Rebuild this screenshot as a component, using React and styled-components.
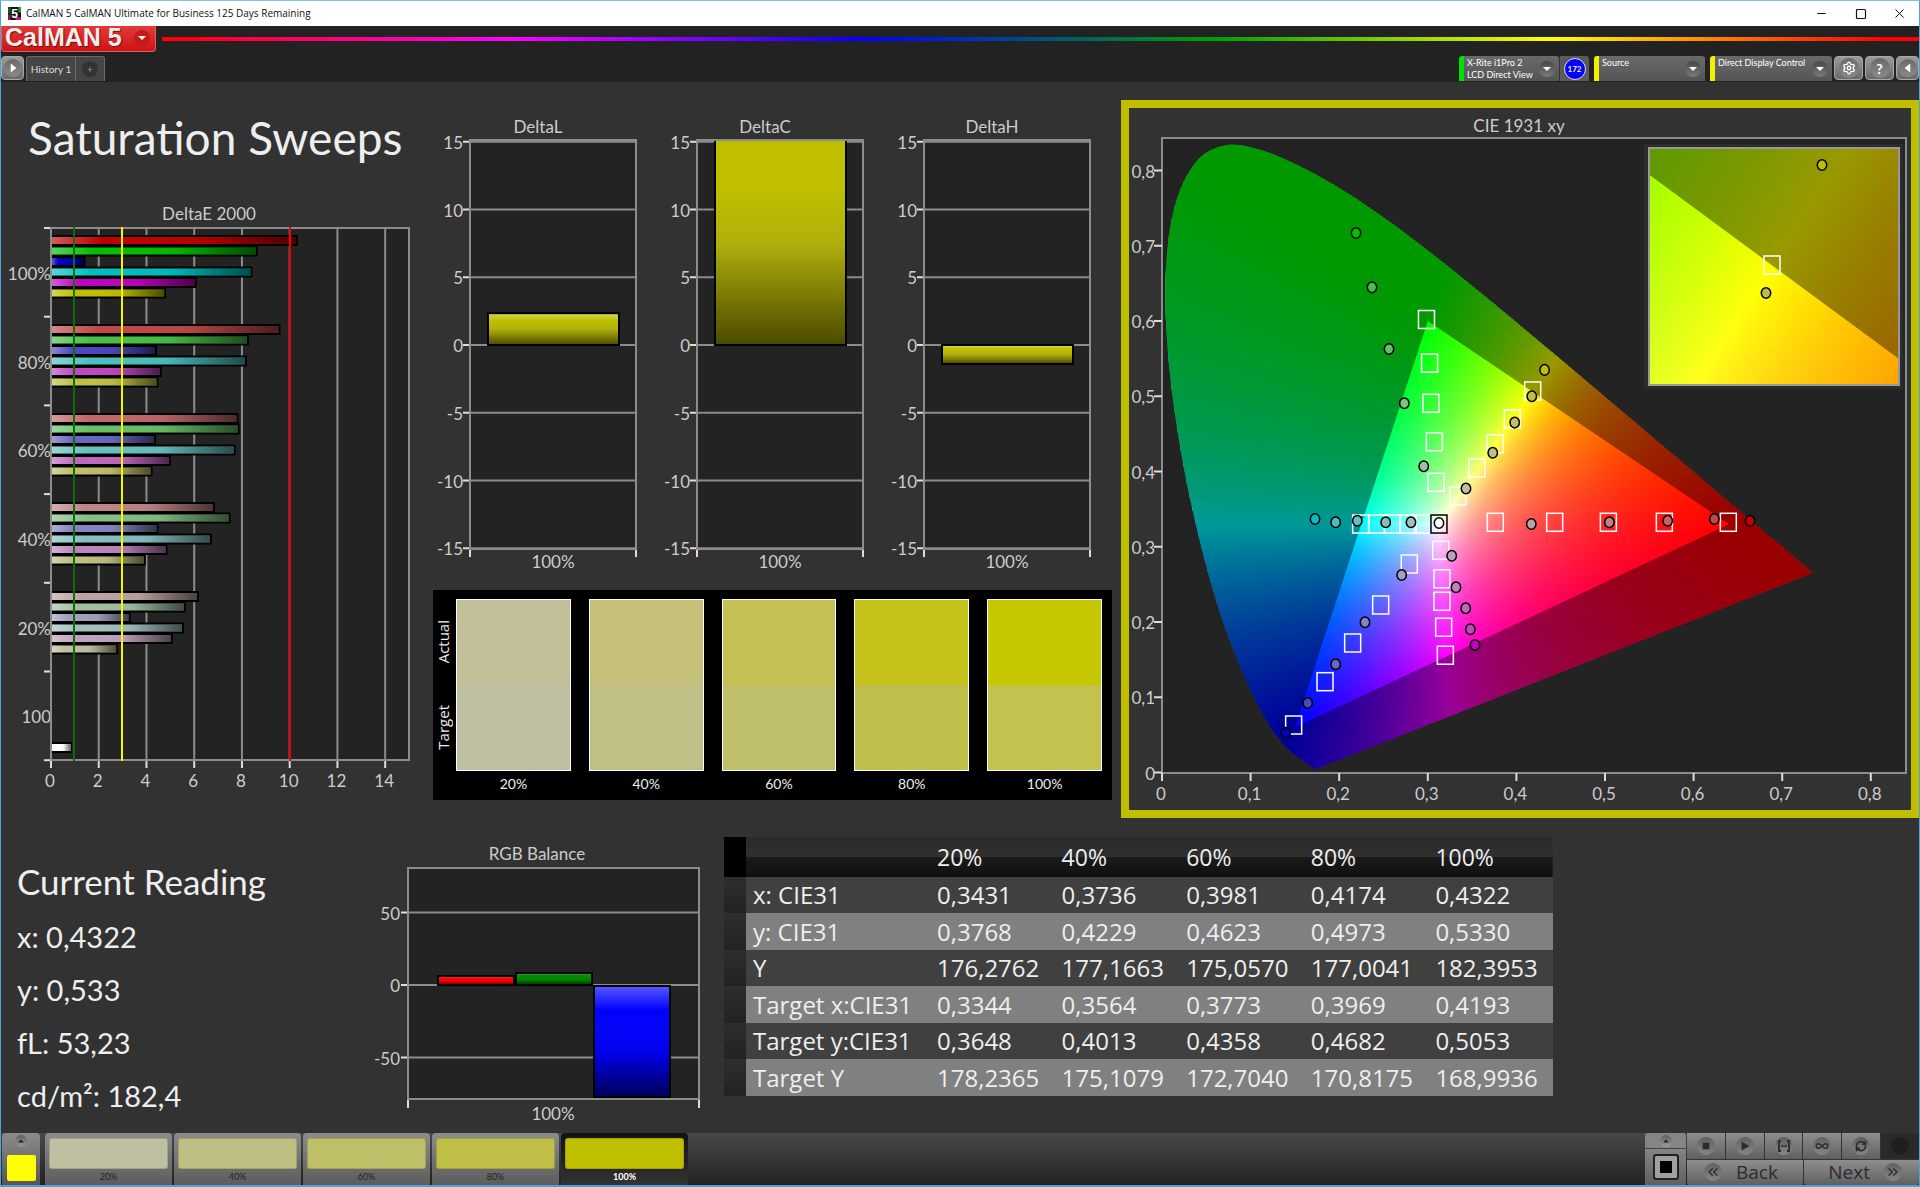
import React from 'react'
import styled, { createGlobalStyle, css } from 'styled-components';
import { Settings, RefreshCw, Infinity as Loop, ChevronsLeft, ChevronsRight, Minus, Square, X } from 'lucide-react';

const levels = ["20%", "40%", "60%", "80%", "100%"];
const lowChannel = { "20%": 161, "40%": 131, "60%": 103, "80%": 72, "100%": 0 };
const hueMask = {
  red: [1, 0, 0],
  green: [0, 1, 0],
  blue: [0, 0, 1],
  cyan: [0, 1, 1],
  magenta: [1, 0, 1],
  yellow: [1, 1, 0],
};
const hues = Object.keys(hueMask);

function shade(hue, level) {
  const low = lowChannel[level];
  return `rgb(${hueMask[hue].map((on) => (on ? 191 : low)).join(",")})`;
}

const deltaE = [
  { label: "100%", values: [10.3, 8.62, 1.4, 8.4, 6.06, 4.78] },
  { label: "80%", values: [9.57, 8.25, 4.4, 8.17, 4.6, 4.46] },
  { label: "60%", values: [7.81, 7.86, 4.36, 7.69, 4.98, 4.21] },
  { label: "40%", values: [6.83, 7.48, 4.46, 6.7, 4.84, 3.93] },
  { label: "20%", values: [6.16, 5.6, 3.29, 5.53, 5.07, 2.77] },
];

const swatches = [
  { label: "20%", actual: "#c2be98", target: "#bfbfa4" },
  { label: "40%", actual: "#c5c077", target: "#bfbf86" },
  { label: "60%", actual: "#c4c051", target: "#bfbf6a" },
  { label: "80%", actual: "#c5c21c", target: "#bfbf4b" },
  { label: "100%", actual: "#c5c800", target: "#c2c24e" },
];

const readings = ["x: 0,4322", "y: 0,533", "fL: 53,23", "cd/m²: 182,4"];

const tableRows = [
  ["x: CIE31", "0,3431", "0,3736", "0,3981", "0,4174", "0,4322"],
  ["y: CIE31", "0,3768", "0,4229", "0,4623", "0,4973", "0,5330"],
  ["Y", "176,2762", "177,1663", "175,0570", "177,0041", "182,3953"],
  ["Target x:CIE31", "0,3344", "0,3564", "0,3773", "0,3969", "0,4193"],
  ["Target y:CIE31", "0,3648", "0,4013", "0,4358", "0,4682", "0,5053"],
  ["Target Y", "178,2365", "175,1079", "172,7040", "170,8175", "168,9936"],
];

//spectral locus, 380nm - 700nm
const locus = [
  [0.1741, 0.005], [0.1714, 0.0051], [0.1689, 0.0069], [0.1644, 0.0109], [0.1566, 0.0177],
  [0.144, 0.0297], [0.1355, 0.0399], [0.1241, 0.0578], [0.1096, 0.0868], [0.0913, 0.1327],
  [0.0687, 0.2007], [0.0454, 0.295], [0.0235, 0.4127], [0.0082, 0.5384], [0.0039, 0.6548],
  [0.0139, 0.7502], [0.0389, 0.812], [0.0743, 0.8338], [0.1142, 0.8262], [0.1547, 0.8059],
  [0.1929, 0.7816], [0.2296, 0.7543], [0.2658, 0.7243], [0.3016, 0.6923], [0.3373, 0.6589],
  [0.3731, 0.6245], [0.4441, 0.5547], [0.5125, 0.4866], [0.5752, 0.4242], [0.627, 0.3725],
  [0.6658, 0.334], [0.6915, 0.3083], [0.719, 0.2809], [0.7347, 0.2653],
];
const gamut = [[0.64, 0.33], [0.3, 0.6], [0.15, 0.06]];
const white = [0.3126, 0.3302];

//20% to 100% for each hue
const targets = {
  red: [[0.3762, 0.3325], [0.4432, 0.3325], [0.5038, 0.3325], [0.567, 0.3325], [0.6392, 0.3325]],
  green: [[0.3093, 0.3856], [0.3074, 0.4396], [0.3036, 0.4906], [0.302, 0.544], [0.2985, 0.602]],
  blue: [[0.2791, 0.2771], [0.2468, 0.2226], [0.2152, 0.1721], [0.184, 0.1207], [0.1486, 0.0631]],
  cyan: [[0.2942, 0.3302], [0.2777, 0.3302], [0.26, 0.3302], [0.2423, 0.3302], [0.2242, 0.3302]],
  magenta: [[0.3146, 0.2953], [0.316, 0.2575], [0.316, 0.2275], [0.3179, 0.193], [0.3198, 0.1558]],
  yellow: [[0.3341, 0.3674], [0.3552, 0.4047], [0.3762, 0.437], [0.3954, 0.4698], [0.4184, 0.507]],
};
const measured = {
  red: [[0.4168, 0.3302], [0.5049, 0.3325], [0.5708, 0.3346], [0.6234, 0.3369], [0.6637, 0.3346]],
  green: [[0.2954, 0.4069], [0.2735, 0.4906], [0.2562, 0.5628], [0.237, 0.6447], [0.219, 0.717]],
  blue: [[0.2705, 0.2625], [0.2291, 0.1996], [0.196, 0.1438], [0.1644, 0.0924], [0.1396, 0.0529]],
  cyan: [[0.281, 0.3325], [0.2525, 0.3325], [0.2204, 0.3346], [0.196, 0.3325], [0.1727, 0.3369]],
  magenta: [[0.327, 0.2881], [0.3318, 0.2461], [0.3428, 0.2182], [0.348, 0.1903], [0.3533, 0.1694]],
  yellow: [[0.3431, 0.3775], [0.3733, 0.425], [0.3981, 0.465], [0.4174, 0.5], [0.4318, 0.535]],
};

function xyToColor(x, y) {
  const yy = Math.max(y, 0.002);
  const X = x / yy;
  const Z = (1 - x - yy) / yy;
  const rgb = [
    3.2406 * X - 1.5372 - 0.4986 * Z,
    -0.9689 * X + 1.8758 + 0.0415 * Z,
    0.0557 * X - 0.204 + 1.057 * Z,
  ].map((c) => Math.max(c, 0));
  const max = Math.max(...rgb);
  return `rgb(${rgb.map((c) => Math.round((c / max) * 255)).join(",")})`;
}

//smooth closed outline through the locus points
function locusPath(sx, sy) {
  const p = locus.map(([x, y]) => [sx(x), sy(y)]);
  let d = `M${p[0][0]} ${p[0][1]}`;
  for (let i = 0; i < p.length - 1; i++) {
    const a = p[Math.max(i - 1, 0)];
    const b = p[i];
    const c = p[i + 1];
    const e = p[Math.min(i + 2, p.length - 1)];
    d += `C${b[0] + (c[0] - a[0]) / 6} ${b[1] + (c[1] - a[1]) / 6} ${c[0] - (e[0] - b[0]) / 6} ${c[1] - (e[1] - b[1]) / 6} ${c[0]} ${c[1]}`;
  }
  return d + "Z";
}

function trianglePath(sx, sy) {
  return "M" + gamut.map(([x, y]) => `${sx(x)} ${sy(y)}`).join("L") + "Z";
}

//narrow columns, each with its own vertical gradient
function ColorField({ id, left, top, right, bottom, toX, toY }) {
  const columns = [];
  for (let px = left; px < right; px += 3) {
    const stops = [];
    for (let py = top; py <= bottom; py += 8) {
      stops.push(
        <stop key={py} offset={(py - top) / (bottom - top)} stopColor={xyToColor(toX(px + 1.5), toY(py))} />
      );
    }
    columns.push(
      <g key={px}>
        <linearGradient id={`${id}${px}`} x1="0" y1="0" x2="0" y2="1">{stops}</linearGradient>
        <rect x={px} y={top} width={Math.min(4, right - px)} height={bottom - top} fill={`url(#${id}${px})`} />
      </g>
    );
  }
  return <>{columns}</>;
}

function Target({ cx, cy, color = "#fff" }) {
  return <rect x={cx - 8} y={cy - 9} width="16" height="18" fill="none" stroke={color} strokeWidth="1.5" />;
}

function Reading({ cx, cy, fill }) {
  return <ellipse cx={cx} cy={cy} rx="4.7" ry="5.3" fill={fill} stroke="#000" strokeWidth="1.5" />;
}

function CieChart() {
  const sx = (x) => 33 + x * 886;
  const sy = (y) => 664.5 - y * 752.5;
  const ix = (x) => 643.5 + (x - 0.4193) * 3870;
  const iy = (y) => 157.5 - (y - 0.5053) * 3600;
  return (
    <Chart viewBox="0 0 782 702" role="img" aria-label="CIE 1931 xy">
      <clipPath id="locusClip"><path d={locusPath(sx, sy)} /></clipPath>
      <clipPath id="insetClip"><rect x="520" y="41" width="249" height="235" /></clipPath>
      <text x="390" y="24" textAnchor="middle">CIE 1931 xy</text>
      <rect x="33" y="30" width="744" height="635" fill="#232323" />
      <g clipPath="url(#locusClip)">
        <ColorField id="cie" left={33} top={32} right={690} bottom={664}
          toX={(px) => (px - 33) / 886} toY={(py) => (664.5 - py) / 752.5} />
      </g>
      <path d={locusPath(sx, sy) + trianglePath(sx, sy)} fill="#000" fillOpacity="0.4" fillRule="evenodd" />
      <rect x="33" y="30" width="744" height="635" fill="none" stroke="#8c8c8c" strokeWidth="2" />
      {[0, 1, 2, 3, 4, 5, 6, 7, 8].map((n) => (
        <g key={n}>
          <path d={`M${sx(n / 10)} 665v8M25 ${sy(n / 10)}h8`} stroke="#ddd" strokeWidth="2" />
          <text x={sx(n / 10) - 1} y="692" textAnchor="middle">{n ? `0,${n}` : "0"}</text>
          <text x="26" y={sy(n / 10) + 7} textAnchor="end">{n ? `0,${n}` : "0"}</text>
        </g>
      ))}
      {hues.map((hue) => targets[hue].map(([x, y], i) => (
        <Target key={hue + i} cx={sx(x)} cy={sy(y)} />
      )))}
      {hues.map((hue) => measured[hue].map(([x, y], i) => (
        <Reading key={hue + i} cx={sx(x)} cy={sy(y)} fill={shade(hue, levels[i])} />
      )))}
      <Target cx={sx(white[0])} cy={sy(white[1])} color="#000" />
      <Reading cx={sx(white[0])} cy={sy(white[1]) - 1} fill="#fff" />

      <rect x="515" y="36" width="259" height="245" fill="#2c2c2c" />
      <g clipPath="url(#insetClip)">
        <ColorField id="inset" left={519} top={40} right={770} bottom={280}
          toX={(px) => 0.4193 + (px - 643.5) / 3870} toY={(py) => 0.5053 - (py - 157.5) / 3600} />
        <path d={"M519 40H770V277H519Z" + trianglePath(ix, iy)} fill="#000" fillOpacity="0.4" fillRule="evenodd" />
      </g>
      <rect x="520" y="40" width="250" height="237" fill="none" stroke="#999" strokeWidth="2" />
      <Target cx={643} cy={157} />
      <Reading cx={693} cy={57} fill="#bfbf00" />
      <Reading cx={637} cy={185} fill={shade("yellow", "80%")} />
    </Chart>
  );
}

function DeltaEChart() {
  const unit = 23.87;
  return (
    <Chart viewBox="0 0 430 600" role="img" aria-label="DeltaE 2000">
      <linearGradient id="bar">
        <stop offset="0" stopColor="#fff" stopOpacity="0.35" />
        <stop offset="0.2" stopColor="#fff" stopOpacity="0" />
        <stop offset="0.6" stopColor="#000" stopOpacity="0.04" />
        <stop offset="1" stopColor="#000" stopOpacity="0.6" />
      </linearGradient>
      <text x="208" y="20" textAnchor="middle">DeltaE 2000</text>
      <rect x="50" y="28" width="358" height="532" fill="#232323" />
      {[0, 2, 4, 6, 8, 10, 12, 14].map((n) => (
        <g key={n}>
          <path d={`M${50 + n * unit} 28v532`} stroke="#8c8c8c" strokeWidth="2" />
          <path d={`M${50 + n * unit} 560v8`} stroke="#ddd" strokeWidth="2" />
          <text x={49 + n * unit} y="587" textAnchor="middle">{n}</text>
        </g>
      ))}
      {[0, 1, 2, 3, 4, 5, 6].map((n) => (
        <path key={n} d={`M43 ${28 + n * 88.7}h7`} stroke="#ddd" strokeWidth="2" />
      ))}
      {deltaE.map((group, g) => (
        <g key={group.label}>
          <text x="50" y={80 + g * 88.7} textAnchor="end">{group.label}</text>
          {group.values.map((value, i) => {
            const y = 36 + g * 89 + i * 10.5;
            return (
              <g key={i}>
                <rect x="51" y={y - 1} width={value * unit} height="11" fill="#000" />
                <rect x="51" y={y + 1} width={value * unit - 2} height="7" fill={shade(hues[i], group.label)} />
                <rect x="51" y={y + 1} width={value * unit - 2} height="7" fill="url(#bar)" />
              </g>
            );
          })}
        </g>
      ))}
      <text x="50" y="523" textAnchor="end">100</text>
      <rect x="51" y="542" width="20" height="11" fill="#000" />
      <rect x="51" y="544" width="19" height="7" fill="#fff" />
      <rect x="51" y="544" width="19" height="7" fill="url(#bar)" />
      <rect x="50" y="28" width="358" height="532" fill="none" stroke="#8c8c8c" strokeWidth="2" />
      <path d="M73 27v534" stroke="#0a6e0a" strokeWidth="2" />
      <path d="M121 27v534" stroke="#f5f500" strokeWidth="2" />
      <path d="M289 27v534" stroke="#f00000" strokeWidth="2" />
    </Chart>
  );
}

function DeltaChart({ title, value }) {
  const y = (v) => 233 - v * 13.55;
  const top = Math.max(y(Math.max(value, 0)), 28);
  const height = y(Math.min(value, 0)) - top;
  const id = `fill${title}`;
  return (
    <Chart viewBox="0 0 227 468" role="img" aria-label={title}>
      <linearGradient id={id} x1="0" y1="0" x2="0" y2="1">
        <stop offset="0" stopColor={value > 15 ? "#bfbf00" : "#d4d450"} />
        <stop offset="0.25" stopColor="#bfbf00" />
        <stop offset="0.5" stopColor="#b0b00c" />
        <stop offset="1" stopColor="#4a4a00" />
      </linearGradient>
      <text x="107" y="21" textAnchor="middle">{title}</text>
      <rect x="39" y="28" width="166" height="409" fill="#232323" />
      {[15, 10, 5, 0, -5, -10, -15].map((n) => (
        <g key={n}>
          <path d={`M39 ${y(n)}h166`} stroke="#8c8c8c" strokeWidth="2" />
          <path d={`M32 ${y(n)}h7`} stroke="#ddd" strokeWidth="2" />
          <text x="32" y={y(n) + 7} textAnchor="end">{n}</text>
        </g>
      ))}
      <rect x="57" y={top} width="131" height={height} fill={`url(#${id})`} stroke="#000" strokeWidth="2" />
      <rect x="39" y="28" width="166" height="409" fill="none" stroke="#8c8c8c" strokeWidth="2" />
      <path d="M39 438v7M205 438v7" stroke="#ddd" strokeWidth="2" />
      <text x="122" y="456" textAnchor="middle">100%</text>
    </Chart>
  );
}

function RgbBalance() {
  return (
    <Chart viewBox="0 0 352 300" role="img" aria-label="RGB Balance">
      <linearGradient id="rgbSheen" x1="0" y1="0" x2="0" y2="1">
        <stop offset="0" stopColor="#fff" stopOpacity="0.35" />
        <stop offset="0.22" stopColor="#fff" stopOpacity="0" />
        <stop offset="0.6" stopColor="#000" stopOpacity="0.08" />
        <stop offset="1" stopColor="#000" stopOpacity="0.65" />
      </linearGradient>
      <text x="176" y="30" textAnchor="middle">RGB Balance</text>
      <rect x="47" y="38" width="291" height="231" fill="#232323" />
      {[50, 0, -50].map((n) => (
        <g key={n}>
          <path d={`M47 ${155 - n * 1.45}h291`} stroke="#8c8c8c" strokeWidth="2" />
          <path d={`M40 ${155 - n * 1.45}h7`} stroke="#ddd" strokeWidth="2" />
          <text x="39" y={162 - n * 1.45} textAnchor="end">{n}</text>
        </g>
      ))}
      {[
        { x: 77, y: 146, h: 9, color: "#ff0000" },
        { x: 155, y: 143, h: 12, color: "#008800" },
        { x: 233, y: 156, h: 111, color: "#0000ff" },
      ].map((bar) => (
        <g key={bar.color}>
          <rect x={bar.x} y={bar.y} width="76" height={bar.h} fill={bar.color} />
          <rect x={bar.x} y={bar.y} width="76" height={bar.h} fill="url(#rgbSheen)" stroke="#000" strokeWidth="2" />
        </g>
      ))}
      <rect x="47" y="38" width="291" height="231" fill="none" stroke="#8c8c8c" strokeWidth="2" />
      <path d="M47 270v8M338 270v8" stroke="#ddd" strokeWidth="2" />
      <text x="192" y="290" textAnchor="middle">100%</text>
    </Chart>
  );
}

function Caret({ d, size = 16 }) {
  return (
    <Knob $size={size}>
      <svg width={size} height={size} viewBox="0 0 16 16"><path d={d} fill="currentColor" /></svg>
    </Knob>
  );
}
const caretDown = "M4 6h8l-4 4z";
const caretUp = "M4 10h8l-4-4z";

export default function App() {
  return (
    <Window>
      <GlobalStyle />
      <TitleBar>
        <AppIcon viewBox="0 0 14 14">
          <rect width="14" height="14" fill="#111" />
          <path d="M0 0h3v7H0z" fill="#0a5a20" />
          <path d="M11 0h3v6h-3z" fill="#1a9a30" />
          <path d="M0 8h3v6H0z" fill="#a01030" />
          <path d="M8 11h6v3H8z" fill="#c01890" />
          <text x="7" y="12" textAnchor="middle" fontSize="13" fontWeight="700" fill="#fff" fontFamily="Liberation Sans, sans-serif">5</text>
        </AppIcon>
        <TitleText>CalMAN 5 CalMAN Ultimate for Business 125 Days Remaining</TitleText>
        <WindowButton aria-label="Minimize"><Minus size={13} strokeWidth={2} /></WindowButton>
        <WindowButton aria-label="Maximize"><Square size={12} strokeWidth={2.4} /></WindowButton>
        <WindowButton aria-label="Close"><X size={15} strokeWidth={1.6} /></WindowButton>
      </TitleBar>

      <Header>
        <BrandRow>
          <Brand aria-label="CalMAN 5 menu">
            <BrandName>CalMAN 5</BrandName>
            <BrandKnob><Caret d={caretDown} /></BrandKnob>
          </Brand>
          <Rainbow />
        </BrandRow>
        <TabRow>
          <ToolButton aria-label="Run"><Caret size={18} d="M6 4v8l5-4z" /></ToolButton>
          <Tabs>
            <Tab>History 1</Tab>
            <AddTab aria-label="Add tab"><Knob $size={16} $dark>+</Knob></AddTab>
          </Tabs>
          <Device $color="#00e000" $width={100}>
            <span>X-Rite i1Pro 2<br />LCD Direct View</span>
            <Caret d={caretDown} />
          </Device>
          <MeterCell><MeterBadge>172</MeterBadge></MeterCell>
          <Device $color="#f0f000" $width={111}>
            <span>Source</span>
            <Caret d={caretDown} />
          </Device>
          <Device $color="#f0f000" $width={122}>
            <span>Direct Display Control</span>
            <Caret d={caretDown} />
          </Device>
          <ToolButton $wide aria-label="Settings"><Knob $size={20}><Settings size={14} strokeWidth={2.2} /></Knob></ToolButton>
          <ToolButton $wide aria-label="Help"><Knob $size={20}><strong>?</strong></Knob></ToolButton>
          <ToolButton aria-label="Collapse"><Caret size={18} d="M10 4v8L5 8z" /></ToolButton>
        </TabRow>
      </Header>

      <Workspace>
        <TopGrid>
          <section>
            <PageTitle>Saturation Sweeps</PageTitle>
            <DeltaEChart />
          </section>
          <Middle>
            <DeltaRow>
              <DeltaChart title="DeltaL" value={2.35} />
              <DeltaChart title="DeltaC" value={16} />
              <DeltaChart title="DeltaH" value={-1.4} />
            </DeltaRow>
            <SwatchPanel>
              <SideLabels>
                <span>Actual</span>
                <span>Target</span>
              </SideLabels>
              {swatches.map((s) => (
                <Swatch key={s.label}>
                  <SwatchBox>
                    <Fill $color={s.actual} />
                    <Fill $color={s.target} />
                  </SwatchBox>
                  <figcaption>{s.label}</figcaption>
                </Swatch>
              ))}
            </SwatchPanel>
          </Middle>
          <CiePanel><CieChart /></CiePanel>
        </TopGrid>

        <BottomGrid>
          <Current>
            <h2>Current Reading</h2>
            {readings.map((r) => <p key={r}>{r}</p>)}
          </Current>
          <RgbWrap><RgbBalance /></RgbWrap>
          <TableWrap>
            <DataTable>
              <colgroup>
                <NarrowCol />
                <NameCol />
                {levels.map((l) => <col key={l} />)}
              </colgroup>
              <thead>
                <tr>
                  <td /><td />
                  {levels.map((l) => <th key={l} scope="col">{l}</th>)}
                </tr>
              </thead>
              <tbody>
                {tableRows.map(([name, ...cells]) => (
                  <tr key={name}>
                    <td />
                    <th scope="row">{name}</th>
                    {cells.map((c, i) => <td key={i}>{c}</td>)}
                  </tr>
                ))}
              </tbody>
            </DataTable>
          </TableWrap>
        </BottomGrid>
      </Workspace>

      <BottomBar>
        <PatternButton aria-label="Pattern window">
          <Caret size={12} d={caretUp} />
          <i />
        </PatternButton>
        {levels.map((l) => (
          <LevelButton key={l} $active={l === "100%"}>
            <LevelColor $color={shade("yellow", l)} />
            {l}
          </LevelButton>
        ))}
        <Spacer />
        <StopStack>
          <UpButton aria-label="Expand"><Caret size={12} d={caretUp} /></UpButton>
          <StopButton aria-label="Stop"><i /></StopButton>
        </StopStack>
        <Controls>
          <ControlRow>
            <Control aria-label="Stop reading"><Caret size={18} d="M5 5h6v6H5z" /></Control>
            <Control aria-label="Play"><Caret size={18} d="M5 4v8l7-4z" /></Control>
            <Control aria-label="Read series">
              <Knob $size={18}>
                <svg width="14" height="14" viewBox="0 0 14 14" fill="none" stroke="currentColor" strokeWidth="1.8">
                  <path d="M4 2H2v10h2M10 2h2v10h-2M4.500 7h2M7.500 7h2" />
                </svg>
              </Knob>
            </Control>
            <Control aria-label="Read continuously"><Knob $size={18}><Loop size={14} strokeWidth={2.5} /></Knob></Control>
            <Control aria-label="Refresh"><Knob $size={18}><RefreshCw size={12} strokeWidth={3.5} /></Knob></Control>
            <Control aria-label="Idle" disabled><Knob $size={18} $dark /></Control>
          </ControlRow>
          <ControlRow>
            <NavButton><Knob $size={18}><ChevronsLeft size={16} /></Knob>Back</NavButton>
            <NavButton $end>Next<Knob $size={18}><ChevronsRight size={16} /></Knob></NavButton>
          </ControlRow>
        </Controls>
      </BottomBar>
    </Window>
  )
}


const GlobalStyle = createGlobalStyle`
  * { box-sizing: border-box; }
  body {
    margin: 0;
    background: #323232;
    font-family: Lato, "Open Sans", sans-serif;
    color: #eeeeee;
  }
  button {
    font-family: inherit;
    color: inherit;
    border: 0;
    padding: 0;
    margin: 0;
    background: none;
  }
`;

const Window = styled.div`
  min-height: 100vh;
  display: flex;
  flex-direction: column;
  border: 1px solid #4ea3d6;
  border-top-color: #7cc0ee;
  border-bottom-width: 2px;
`;

//title bar
const TitleBar = styled.div`
  height: 25px;
  flex: none;
  display: flex;
  align-items: center;
  background: #ffffff;
  color: #111111;
  padding-left: 7px;
`;
const AppIcon = styled.svg`
  width: 13px;
  height: 13px;
`;
const TitleText = styled.span`
  flex: 1;
  margin-left: 5px;
  padding-bottom: 1px;
  font: 10px/14px "Open Sans", sans-serif;
`;
const WindowButton = styled.button`
  width: 39px;
  height: 25px;
  display: flex;
  align-items: center;
  justify-content: center;
`;

//header
const Header = styled.header`
  background: #222222;
  height: 56px;
  flex: none;
`;
const BrandRow = styled.div`
  display: flex;
  height: 30px;
`;
const Brand = styled.button`
  width: 155px;
  height: 26px;
  display: flex;
  align-items: flex-start;
  background: linear-gradient(#e23a3a, #cf1414);
  border: 1px solid #e06060;
  border-top: 0;
  border-radius: 0 0 4px 4px;
`;
const BrandName = styled.span`
  flex: 1;
  text-align: left;
  padding-left: 3px;
  font: bold 25px/23px "Liberation Sans", sans-serif;
  color: #eeeeee;
  text-shadow: 1px 1px 1px #7a0c0c;
  white-space: nowrap;
`;
const BrandKnob = styled.span`
  margin: 4px 5px 0 0;
  color: #ffffff;
  > span { background: #c41a1a; }
`;
const Rainbow = styled.div`
  flex: 1;
  height: 4px;
  margin: 11px 0 0 6px;
  background: linear-gradient(90deg, #ff0000, #ff00ff 20%, #0000ff 40%, #00a000 60%, #ffff00 79%, #ff0000 98%);
`;
const TabRow = styled.div`
  display: flex;
  height: 26px;
  align-items: flex-start;
`;
const Knob = styled.span`
  width: ${(p) => p.$size}px;
  height: ${(p) => p.$size}px;
  flex: none;
  border-radius: 50%;
  display: inline-flex;
  align-items: center;
  justify-content: center;
  background: ${(p) => (p.$dark ? "rgba(0,0,0,0.25)" : "linear-gradient(rgba(0,0,0,0.3), rgba(255,255,255,0.2))")};
`;
const raised = css`
  background: linear-gradient(#9a9a9a, #6a6a6a);
  border: 1px solid #a8a8a8;
`;
const ToolButton = styled.button`
  ${raised}
  width: ${(p) => (p.$wide ? 29 : 23)}px;
  height: 24px;
  margin-left: 2px;
  border-radius: 4px;
  display: flex;
  align-items: center;
  justify-content: center;
  color: #ffffff;
  font-size: 14px;
  &:first-child { margin-left: 0; }
`;
const Tabs = styled.nav`
  display: flex;
  flex: 1;
  margin-left: 2px;
`;
const Tab = styled.button`
  height: 25px;
  width: 50px;
  background: #454545;
  border: 1px solid #6a6a6a;
  border-bottom: 0;
  border-radius: 3px 0 0 0;
  color: #dddddd;
  font-size: 10px;
  white-space: nowrap;
`;
const AddTab = styled(Tab)`
  width: 29px;
  border-left: 0;
  border-radius: 0 3px 0 0;
  color: #999999;
`;
const Device = styled.button`
  width: ${(p) => p.$width}px;
  height: 25px;
  display: flex;
  align-items: flex-start;
  text-align: left;
  padding: 1px 4px 0 3px;
  margin-left: 5px;
  border-left: 5px solid ${(p) => p.$color};
  border-radius: 3px 3px 0 0;
  background: linear-gradient(#6a6a6a, #555555);
  color: #ffffff;
  font-size: 9px;
  line-height: 12px;
  white-space: nowrap;
  > span:first-child { flex: 1; }
  > span:last-child { align-self: center; }
`;
const MeterCell = styled.div`
  width: 30px;
  height: 25px;
  display: flex;
  align-items: center;
  justify-content: center;
  background: #5a5a5a;
  border-left: 1px solid #333333;
  border-radius: 0 3px 0 0;
`;
const MeterBadge = styled.span`
  width: 22px;
  height: 22px;
  border-radius: 50%;
  border: 1px solid #dddddd;
  background: #0000ff;
  font-size: 8px;
  font-weight: 700;
  line-height: 20px;
  text-align: center;
`;

//workspace
const Workspace = styled.main`
  flex: 1;
`;
const Chart = styled.svg`
  display: block;
  width: 100%;
  height: auto;
  text {
    font-family: Lato, sans-serif;
    font-size: 17px;
    fill: #cccccc;
  }
`;
const TopGrid = styled.div`
  display: grid;
  grid-template-columns: minmax(0, 430fr) minmax(0, 690fr) minmax(0, 798fr);
  align-items: start;
`;
const PageTitle = styled.h1`
  margin: 0;
  height: 118px;
  padding: 26px 0 0 27px;
  font-size: 46px;
  line-height: 60px;
  font-weight: 400;
  white-space: nowrap;
`;
const Middle = styled.section`
  padding: 30px 9px 0 0;
`;
const DeltaRow = styled.div`
  display: grid;
  grid-template-columns: repeat(3, 1fr);
`;
const SwatchPanel = styled.div`
  display: grid;
  grid-template-columns: 5px repeat(5, 1fr);
  column-gap: 18px;
  margin: 10px 0 0 2px;
  padding: 9px 10px 4px 0;
  background: #000000;
`;
const SideLabels = styled.div`
  display: flex;
  flex-direction: column;
  justify-content: space-around;
  align-items: flex-start;
  height: 172px;
  font: 15px/20px "Open Sans", sans-serif;
  > span {
    writing-mode: vertical-rl;
    transform: rotate(180deg);
  }
`;
const Swatch = styled.figure`
  margin: 0;
  text-align: center;
  font-size: 14px;
  line-height: 25px;
`;
const SwatchBox = styled.div`
  height: 172px;
  border: 1px solid #ffffff;
  display: flex;
  flex-direction: column;
`;
const Fill = styled.div`
  flex: 1;
  background: ${(p) => p.$color};
`;
const CiePanel = styled.section`
  margin-top: 18px;
  border: 8px solid #bfbf00;
`;

//lower half
const BottomGrid = styled.div`
  display: grid;
  grid-template-columns: minmax(0, 360fr) minmax(0, 352fr) minmax(0, 840fr) minmax(0, 366fr);
  align-items: start;
`;
const Current = styled.section`
  padding: 34px 0 0 16px;
  white-space: nowrap;
  h2 {
    margin: 0;
    font-size: 35px;
    line-height: 58px;
    font-weight: 400;
  }
  p {
    margin: 0;
    font-size: 29px;
    line-height: 53px;
  }
`;
const RgbWrap = styled.div`
  padding-top: 12px;
`;
const TableWrap = styled.div`
  padding: 19px 0 0 11px;
`;
const NarrowCol = styled.col`
  width: 22px;
`;
const NameCol = styled.col`
  width: 184px;
`;
const DataTable = styled.table`
  width: 100%;
  table-layout: fixed;
  border-collapse: collapse;
  font: 24px/30px "Open Sans", sans-serif;
  white-space: nowrap;
  th, td {
    font-weight: 400;
    text-align: left;
    padding: 0 0 0 7px;
    height: 36px;
  }
  thead tr {
    background: linear-gradient(#2a2a2a, #303030 49%, #1a1a1a 50%, #101010);
  }
  thead th, thead td { height: 40px; font-size: 23px; }
  thead td:first-child { background: #000000; }
  tbody tr { background: #404040; }
  tbody tr:nth-child(even) { background: #808080; }
  tbody tr:nth-child(even) > * { height: 37px; }
  tbody td:first-child { background: linear-gradient(#2e2e2e, #222222); }
`;

//bottom bar
const BottomBar = styled.footer`
  height: 52px;
  flex: none;
  display: flex;
  background: linear-gradient(#484848, #222222);
`;
const PatternButton = styled.button`
  width: 38px;
  margin: 0 5px 0 1px;
  display: flex;
  flex-direction: column;
  align-items: center;
  justify-content: space-between;
  padding: 2px 0 4px;
  border-radius: 4px 4px 0 0;
  background: linear-gradient(#8c8c8c, #555555);
  color: #222222;
  > i {
    width: 29px;
    height: 26px;
    border-radius: 2px;
    background: #ffff00;
  }
`;
const LevelButton = styled.button`
  width: 127px;
  margin-right: 2px;
  padding: 5px 4px 0;
  border-radius: 4px 4px 0 0;
  background: ${(p) => (p.$active ? "linear-gradient(#111111, #333333)" : "linear-gradient(#8c8c8c, #5c5c5c)")};
  color: ${(p) => (p.$active ? "#ffffff" : "#222222")};
  font-weight: ${(p) => (p.$active ? 700 : 400)};
  font-size: 9px;
  line-height: 16px;
`;
const LevelColor = styled.span`
  display: block;
  height: 31px;
  border-radius: 3px;
  border: 1px solid rgba(0, 0, 0, 0.15);
  background: ${(p) => p.$color};
`;
const Spacer = styled.div`
  flex: 1;
`;
const StopStack = styled.div`
  width: 41px;
  display: flex;
  flex-direction: column;
  margin-right: 1px;
  color: #222222;
`;
const UpButton = styled.button`
  height: 16px;
  display: flex;
  align-items: center;
  justify-content: center;
  background: #858585;
  border-bottom: 1px solid #444444;
  border-radius: 3px 3px 0 0;
`;
const StopButton = styled.button`
  flex: 1;
  display: flex;
  align-items: center;
  justify-content: center;
  background: linear-gradient(#858585, #606060);
  > i {
    width: 26px;
    height: 26px;
    border: 2px solid #222222;
    border-radius: 3px;
    background: #000000;
    box-shadow: inset 0 0 0 5px #a0a0a0;
  }
`;
const Controls = styled.div`
  width: 232px;
  display: flex;
  flex-direction: column;
  gap: 1px;
`;
const ControlRow = styled.div`
  display: flex;
  flex: 1;
  gap: 1px;
  background: #333333;
`;
const Control = styled.button`
  flex: 1;
  display: flex;
  align-items: center;
  justify-content: center;
  background: ${(p) => (p.disabled ? "#2a2a2a" : "linear-gradient(#8e8e8e, #606060)")};
  color: #2c2c2c;
`;
const NavButton = styled(Control)`
  justify-content: ${(p) => (p.$end ? "flex-end" : "flex-start")};
  gap: 14px;
  padding: 0 17px;
  font: 19px/24px "Open Sans", sans-serif;
  border-radius: 0 0 3px 3px;
`;
